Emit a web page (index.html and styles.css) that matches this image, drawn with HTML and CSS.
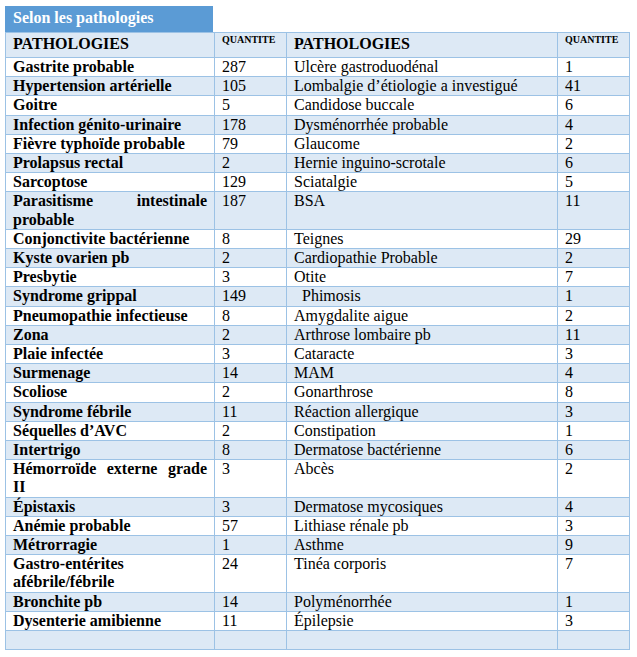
FILE: index.html
```html
<!DOCTYPE html>
<html lang="fr">
<head>
<meta charset="utf-8">
<link rel="stylesheet" href="styles.css">
</head>
<body>
<div class="page">
  <div class="title">Selon les pathologies</div>
  <table class="grid">
    <colgroup>
      <col class="c1"><col class="c2"><col class="c3"><col class="c4">
    </colgroup>
    <tr class="head">
      <th>PATHOLOGIES</th><th class="q">QUANTITE</th><th>PATHOLOGIES</th><th class="q">QUANTITE</th>
    </tr>
    <tr><td class="b">Gastrite probable</td><td>287</td><td>Ulcère gastroduodénal</td><td>1</td></tr>
    <tr><td class="b">Hypertension artérielle</td><td>105</td><td>Lombalgie d’étiologie a investigué</td><td>41</td></tr>
    <tr><td class="b">Goitre</td><td>5</td><td>Candidose buccale</td><td>6</td></tr>
    <tr><td class="b">Infection génito-urinaire</td><td>178</td><td>Dysménorrhée probable</td><td>4</td></tr>
    <tr><td class="b">Fièvre typhoïde probable</td><td>79</td><td>Glaucome</td><td>2</td></tr>
    <tr><td class="b">Prolapsus rectal</td><td>2</td><td>Hernie inguino-scrotale</td><td>6</td></tr>
    <tr><td class="b">Sarcoptose</td><td>129</td><td>Sciatalgie</td><td>5</td></tr>
    <tr><td class="b j">Parasitisme intestinale probable</td><td>187</td><td>BSA</td><td>11</td></tr>
    <tr><td class="b">Conjonctivite bactérienne</td><td>8</td><td>Teignes</td><td>29</td></tr>
    <tr><td class="b">Kyste ovarien pb</td><td>2</td><td>Cardiopathie Probable</td><td>2</td></tr>
    <tr><td class="b">Presbytie</td><td>3</td><td>Otite</td><td>7</td></tr>
    <tr><td class="b">Syndrome grippal</td><td>149</td><td>&nbsp;&nbsp;Phimosis</td><td>1</td></tr>
    <tr><td class="b">Pneumopathie infectieuse</td><td>8</td><td>Amygdalite aigue</td><td>2</td></tr>
    <tr><td class="b">Zona</td><td>2</td><td>Arthrose lombaire pb</td><td>11</td></tr>
    <tr><td class="b">Plaie infectée</td><td>3</td><td>Cataracte</td><td>3</td></tr>
    <tr><td class="b">Surmenage</td><td>14</td><td>MAM</td><td>4</td></tr>
    <tr><td class="b">Scoliose</td><td>2</td><td>Gonarthrose</td><td>8</td></tr>
    <tr><td class="b">Syndrome fébrile</td><td>11</td><td>Réaction allergique</td><td>3</td></tr>
    <tr><td class="b">Séquelles d’AVC</td><td>2</td><td>Constipation</td><td>1</td></tr>
    <tr><td class="b">Intertrigo</td><td>8</td><td>Dermatose bactérienne</td><td>6</td></tr>
    <tr><td class="b j">Hémorroïde externe grade II</td><td>3</td><td>Abcès</td><td>2</td></tr>
    <tr><td class="b">Épistaxis</td><td>3</td><td>Dermatose mycosiques</td><td>4</td></tr>
    <tr><td class="b">Anémie probable</td><td>57</td><td>Lithiase rénale pb</td><td>3</td></tr>
    <tr><td class="b">Métrorragie</td><td>1</td><td>Asthme</td><td>9</td></tr>
    <tr><td class="b">Gastro-entérites afébrile/fébrile</td><td>24</td><td>Tinéa corporis</td><td>7</td></tr>
    <tr><td class="b">Bronchite pb</td><td>14</td><td>Polyménorrhée</td><td>1</td></tr>
    <tr><td class="b">Dysenterie amibienne</td><td>11</td><td>Épilepsie</td><td>3</td></tr>
    <tr class="empty"><td></td><td></td><td></td><td></td></tr>
  </table>
</div>
</body>
</html>
```

FILE: styles.css
```css
html, body {
  margin: 0;
  padding: 0;
  background: #ffffff;
}

.page {
  padding: 6px 0 0 5px;
  font-family: "Liberation Serif", "Times New Roman", serif;
  color: #000000;
}

.title {
  width: 208px;
  height: 26px;
  box-sizing: border-box;
  background: #5b9bd5;
  color: #ffffff;
  font-weight: bold;
  font-size: 16px;
  line-height: 22px;
  padding: 1px 8px 0;
}

.grid {
  border-collapse: collapse;
  table-layout: fixed;
  width: 624px;
  font-size: 16px;
  line-height: 18.2px;
}

.c1 { width: 209px; }
.c2 { width: 72px; }
.c3 { width: 271px; }
.c4 { width: 72px; }

.grid th,
.grid td {
  border: 1px solid #9cc2e5;
  padding: 0 7px;
  text-align: left;
  vertical-align: top;
  font-weight: normal;
}

.grid tr:nth-child(odd) {
  background: #dde9f5;
}

.grid tr:nth-child(even) {
  background: #ffffff;
}

.grid .head th {
  font-weight: bold;
  height: 25px;
  padding-top: 2px;
  box-sizing: border-box;
}

.grid .head th.q {
  font-size: 10px;
  line-height: 12px;
  padding-top: 1px;
}

.grid td.b {
  font-weight: bold;
}

.grid td.j {
  text-align: justify;
  text-align-last: left;
}

.grid .empty td {
  height: 18.2px;
}
```
